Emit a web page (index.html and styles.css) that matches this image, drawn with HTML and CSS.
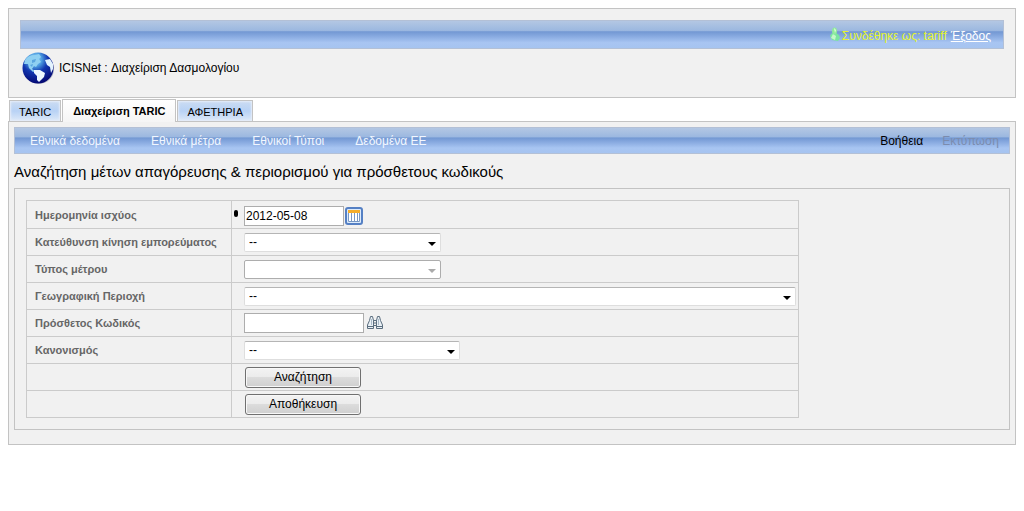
FILE: index.html
```html
<!DOCTYPE html>
<html lang="el">
<head>
<meta charset="utf-8">
<title>ICISNet : Διαχείριση Δασμολογίου</title>
<link rel="stylesheet" href="styles.css">
</head>
<body>
<header class="header">
  <div class="bar session">
    <svg class="user-icon" viewBox="0 0 10 15" aria-hidden="true">
      <path d="M0 9Q1 6 4 6Q9 6 10 11L8 14L2 13Z" fill="#7be5a0"/>
      <path d="M3 7L6 9L5 13L1 11Z" fill="#c6f7c9"/>
      <ellipse cx="4.500" cy="4" rx="2.500" ry="3.500" fill="#8feb9c"/>
      <path d="M4 1L6 3L5 6Z" fill="#e5ffd9"/>
    </svg>
    <span class="who">Συνδέθηκε ως: tariff</span>
    <a class="logout" href="#">Έξοδος</a>
  </div>
  <div class="brand">
    <svg class="globe" viewBox="0 0 32 32" aria-hidden="true">
      <defs>
        <radialGradient id="sea" cx="40%" cy="22%" r="80%">
          <stop offset="0" stop-color="#9ddcf8"/>
          <stop offset=".28" stop-color="#4c9be0"/>
          <stop offset=".52" stop-color="#1237b0"/>
          <stop offset="1" stop-color="#030670"/>
        </radialGradient>
      </defs>
      <circle cx="17" cy="17" r="15" fill="#b9bcc6"/>
      <circle cx="16" cy="16" r="15.500" fill="url(#sea)"/>
      <path d="M3 8Q6 3 13 3L17 2L19 5L17 7L19 10L16 12L14 15L12 14L10 17L13 19L11 20L7 16L6 12L2 12Z" fill="#8fd0f2"/>
      <path d="M12 18L18 18L23 21L22 25L19 28L17 30L15 28L15 24L12 21Z" fill="#edf7ff"/>
      <path d="M23 8L28 7L31 12L31 17L29 21L28 15L25 13Z" fill="#e3f3ff"/>
      <path d="M10 8L14 7L13 10L10 11ZM8 13L11 12L10 15Z" fill="#5ba6df"/>
    </svg>
    <span>ICISNet : Διαχείριση Δασμολογίου</span>
  </div>
</header>

<nav class="tabs">
  <a class="tab" href="#">TARIC</a>
  <a class="tab active" href="#">Διαχείριση TARIC</a>
  <a class="tab" href="#">ΑΦΕΤΗΡΙΑ</a>
</nav>

<main class="content">
  <nav class="bar menu">
    <a href="#">Εθνικά δεδομένα</a>
    <a href="#">Εθνικά μέτρα</a>
    <a href="#">Εθνικοί Τύποι</a>
    <a href="#">Δεδομένα ΕΕ</a>
    <a class="help" href="#">Βοήθεια</a>
    <a class="off" aria-disabled="true">Εκτύπωση</a>
  </nav>
  <h1 class="title">Αναζήτηση μέτων απαγόρευσης &amp; περιορισμού για πρόσθετους κωδικούς</h1>
  <form class="box">
    <table class="form">
      <tr class="tall">
        <th><label for="date">Ημερομηνία ισχύος</label></th>
        <td>
          <div class="field date-field">
            <span class="required"></span>
            <input class="text date" id="date" type="text" value="2012-05-08">
            <button class="icon-button" type="button" aria-label="Ημερολόγιο">
              <svg width="18" height="18" viewBox="0 0 18 18" aria-hidden="true">
                <rect x="1" y="1" width="16" height="16" rx="2" fill="#dcebfc" stroke="#5580c4" stroke-width="2"/>
                <rect x="3" y="3" width="12" height="3" fill="#f4ad2b"/>
                <rect x="3" y="6" width="12" height="9" fill="#fff"/>
                <path d="M3.500 6V14.500H14.500V6M6.500 6V14M9.500 6V14M12.500 6V14" fill="none" stroke="#7898c4"/>
              </svg>
            </button>
          </div>
        </td>
      </tr>
      <tr>
        <th><label for="direction">Κατεύθυνση κίνηση εμπορεύματος</label></th>
        <td><div class="field"><select class="select" id="direction"><option>--</option></select></div></td>
      </tr>
      <tr>
        <th><label for="type">Τύπος μέτρου</label></th>
        <td><div class="field"><select class="select" id="type" disabled><option></option></select></div></td>
      </tr>
      <tr>
        <th><label for="area">Γεωγραφική Περιοχή</label></th>
        <td><div class="field"><select class="select wide" id="area"><option>--</option></select></div></td>
      </tr>
      <tr>
        <th><label for="code">Πρόσθετος Κωδικός</label></th>
        <td>
          <div class="field">
            <input class="text" id="code" type="text">
            <button class="icon-button find" type="button" aria-label="Εύρεση">
              <svg width="16" height="16" viewBox="0 0 16 16" aria-hidden="true">
                <path d="M2.500 5.500L3.500 1.500H5.500L6.500 5.500V13.500H.5V10ZM13.500 5.500L12.500 1.500H10.500L9.500 5.500V13.500H15.500V10Z" fill="#e9f0f5" stroke="#5b6e7f"/>
                <path d="M6.500 5.500H9.500V10.500H6.500ZM1 11.500H6M10 11.500H15M6.500 8H9.500" fill="none" stroke="#5b6e7f"/>
                <path d="M4.500 4V10M11.500 4V10" stroke="#a9bac8"/>
              </svg>
            </button>
          </div>
        </td>
      </tr>
      <tr>
        <th><label for="rule">Κανονισμός</label></th>
        <td><div class="field"><select class="select medium" id="rule"><option>--</option></select></div></td>
      </tr>
      <tr>
        <th></th>
        <td><div class="field"><button class="push" type="button">Αναζήτηση</button></div></td>
      </tr>
      <tr>
        <th></th>
        <td><div class="field"><button class="push" type="button">Αποθήκευση</button></div></td>
      </tr>
    </table>
  </form>
</main>
</body>
</html>
```
FILE: styles.css
```css
* { box-sizing: border-box; }

body {
  margin: 8px;
  background: #fff;
  color: #000;
  font: 12px/16px "Liberation Sans", Arial, sans-serif;
}

a { color: inherit; text-decoration: none; }

.header {
  padding: 11px;
  border: 1px solid #c3c3c3;
  background: #f1f1f1;
}

.bar {
  display: flex;
  align-items: center;
  border: 1px solid #b3c0d6;
  background: linear-gradient(#b3c7e3 0, #9cb8e0 35%, #7398d3 40%, #86a8df 55%, #a8c5f2 80%, #a6c4f0 100%);
}

.session {
  height: 29px;
  padding: 2px 12px 0;
  justify-content: flex-end;
}

.user-icon { width: 10px; height: 15px; margin: 0 2px 3px 0; }
.who { color: #e6f52c; margin-right: 4px; }
.logout { color: #fff; text-decoration: underline; }

.brand {
  display: flex;
  align-items: center;
  gap: 5px;
  padding: 3px 2px 2px;
}

.globe { width: 32px; height: 32px; }

.tabs {
  display: flex;
  align-items: flex-end;
  gap: 1px;
  padding: 1px 1px 0;
  font-size: 11px;
}

.tab {
  height: 21px;
  padding: 3px 9px 0;
  border: 1px solid #c3c3c3;
  border-bottom: 0;
  background: linear-gradient(#cbdcf2, #b8d2f5 50%, #dde9f8);
  box-shadow: inset 0 0 2px 1px #e5edf8;
}

.tab.active {
  position: relative;
  height: 23px;
  margin-bottom: -1px;
  padding: 3px 10px 0;
  background: linear-gradient(#fff, #f5f5f5);
  box-shadow: none;
  font-weight: bold;
}

.content {
  padding: 5px 5px 14px;
  border: 1px solid #c3c3c3;
  background: #f1f1f1;
}

.menu {
  height: 27px;
  gap: 31px;
  padding: 0 10px 0 15px;
  color: #f2f7ff;
}

.help { margin-left: auto; color: #000; }
.menu .off { margin-left: -12px; color: #7b8cae; }

.title {
  margin: 8px 0 6px;
  font-size: 15px;
  line-height: 20px;
  font-weight: normal;
}

.box {
  padding: 11px;
  border: 1px solid #c3c3c3;
}

.form { border-collapse: collapse; }
.form tr { height: 27px; }
.form .tall { height: 28px; }

.form th,
.form td {
  padding: 0;
  border: 1px solid #cbcbcb;
  text-align: left;
}

.form th {
  min-width: 205px;
  padding: 0 8px;
  color: #666;
  font-size: 11px;
  white-space: nowrap;
}

.field {
  position: relative;
  display: flex;
  align-items: center;
  padding: 0 2px 0 12px;
}

.date-field { padding-top: 3px; }

.required {
  position: absolute;
  left: 2px;
  top: 7px;
  width: 4px;
  height: 7px;
  border-radius: 2px;
  background: #000;
}

.text {
  width: 120px;
  height: 20px;
  padding: 0 1px;
  border: 1px solid #adadad;
  background: #fff;
  font: inherit;
}

.text.date { width: 100px; }

.icon-button {
  display: flex;
  margin-left: 1px;
  padding: 0;
  border: 0;
  background: none;
}

.icon-button.find { margin-left: 3px; }

.select {
  width: 197px;
  height: 19px;
  padding: 0 4px;
  appearance: none;
  border: 1px solid #dedede;
  border-top-color: #b5b5b5;
  border-radius: 2px;
  background: #fff url("data:image/svg+xml,%3Csvg xmlns='http://www.w3.org/2000/svg' width='8' height='4'%3E%3Cpath d='M0 0H8L4 4Z'/%3E%3C/svg%3E") no-repeat right 4px top 8px;
  color: #000;
  font: inherit;
}

.select:disabled {
  border-color: #adadad;
  opacity: 1;
  background-image: url("data:image/svg+xml,%3Csvg xmlns='http://www.w3.org/2000/svg' width='8' height='4'%3E%3Cpath d='M0 0H8L4 4Z' fill='%23aaa'/%3E%3C/svg%3E");
}

.select.medium { width: 216px; }
.select.wide { width: 552px; }

.push {
  width: 116px;
  height: 21px;
  margin-left: 1px;
  padding: 0;
  border: 1px solid #707070;
  border-radius: 3px;
  background: linear-gradient(#f3f3f3, #ebebeb 50%, #dcdcdc 50%, #cfcfcf);
  box-shadow: inset 0 0 0 1px #f8f8f8;
  color: #000;
  font: inherit;
}
```
